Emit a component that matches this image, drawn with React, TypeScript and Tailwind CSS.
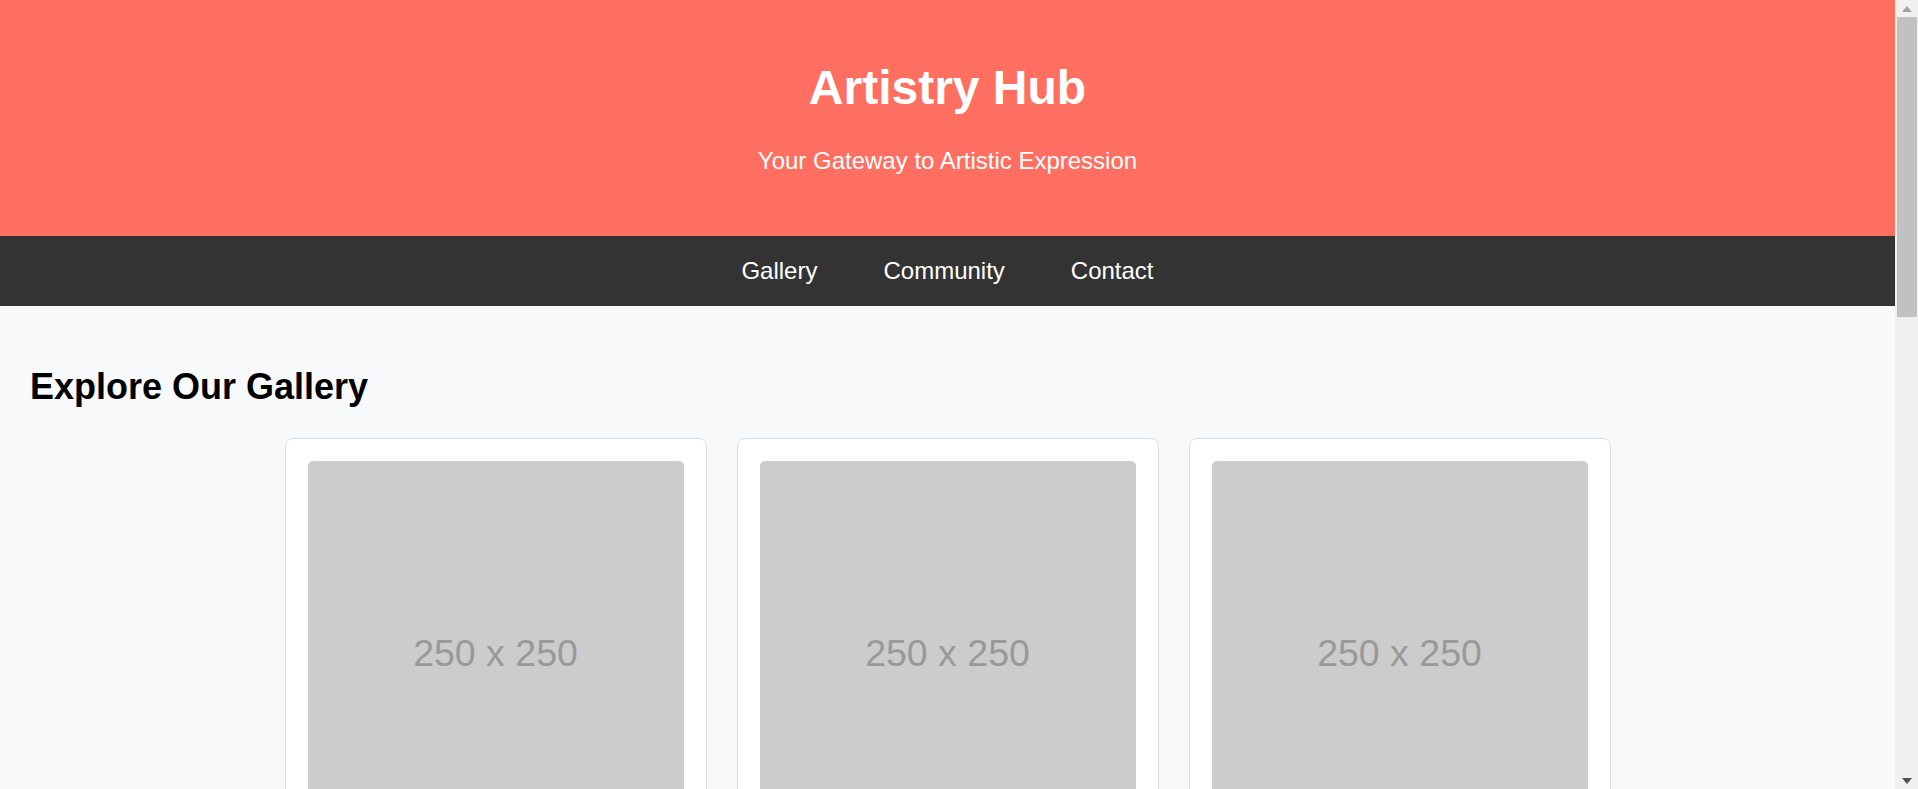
import React from "react";

const font = { fontFamily: '"Liberation Sans", Arial, sans-serif' };

function Card() {
  return (
    <div className="w-[422px] shrink-0 rounded-[8px] border border-[#dedede] bg-white p-[22px]">
      <div className="flex aspect-square w-full items-center justify-center rounded-[5px] bg-[#cccccc] pt-[10px]">
        <span className="text-[37.5px] leading-none text-[#999999]">250 x 250</span>
      </div>
    </div>
  );
}

function Scrollbar() {
  return (
    <div className="flex h-[789px] w-[23px] shrink-0 flex-col items-center self-start bg-[#f0f0f0]">
      <div className="flex h-[17px] w-full items-center justify-center">
        <svg width="10" height="6" viewBox="0 0 10 6">
          <path d="M5 0 L10 6 L0 6 Z" fill="#a3a3a3" />
        </svg>
      </div>
      <div className="h-[300px] w-[20px] bg-[#c1c1c1]" />
      <div className="flex-1" />
      <div className="flex h-[17px] w-full items-center justify-center">
        <svg width="10" height="6" viewBox="0 0 10 6">
          <path d="M0 0 L10 0 L5 6 Z" fill="#505050" />
        </svg>
      </div>
    </div>
  );
}

export default function App() {
  return (
    <div className="flex min-h-screen bg-[#f8f9fa]" style={font}>
      <div className="min-w-0 flex-1">
        <header className="bg-[#ff6f61] pt-[60px] pb-[61px] text-center text-white">
          <h1 className="text-[48px] font-bold leading-[55px]">Artistry Hub</h1>
          <p className="mt-[32px] text-[24px] leading-[28px]">Your Gateway to Artistic Expression</p>
        </header>
        <nav className="flex h-[70px] items-center justify-center gap-[66px] bg-[#333333] text-[24px] text-white">
          <a href="#gallery">Gallery</a>
          <a href="#community">Community</a>
          <a href="#contact">Contact</a>
        </nav>
        <main id="gallery" className="min-h-[1674px] px-[30px] pt-[60px] pb-[60px]">
          <h2 className="text-[36px] font-bold leading-[41px] text-black">Explore Our Gallery</h2>
          <div className="mt-[31px] flex flex-col items-center gap-[30px]">
            <div className="flex justify-center gap-[30px]">
              <Card />
              <Card />
              <Card />
            </div>
            <div className="flex justify-center gap-[30px]">
              <Card />
              <Card />
              <Card />
            </div>
          </div>
        </main>
      </div>
      <Scrollbar />
    </div>
  );
}
